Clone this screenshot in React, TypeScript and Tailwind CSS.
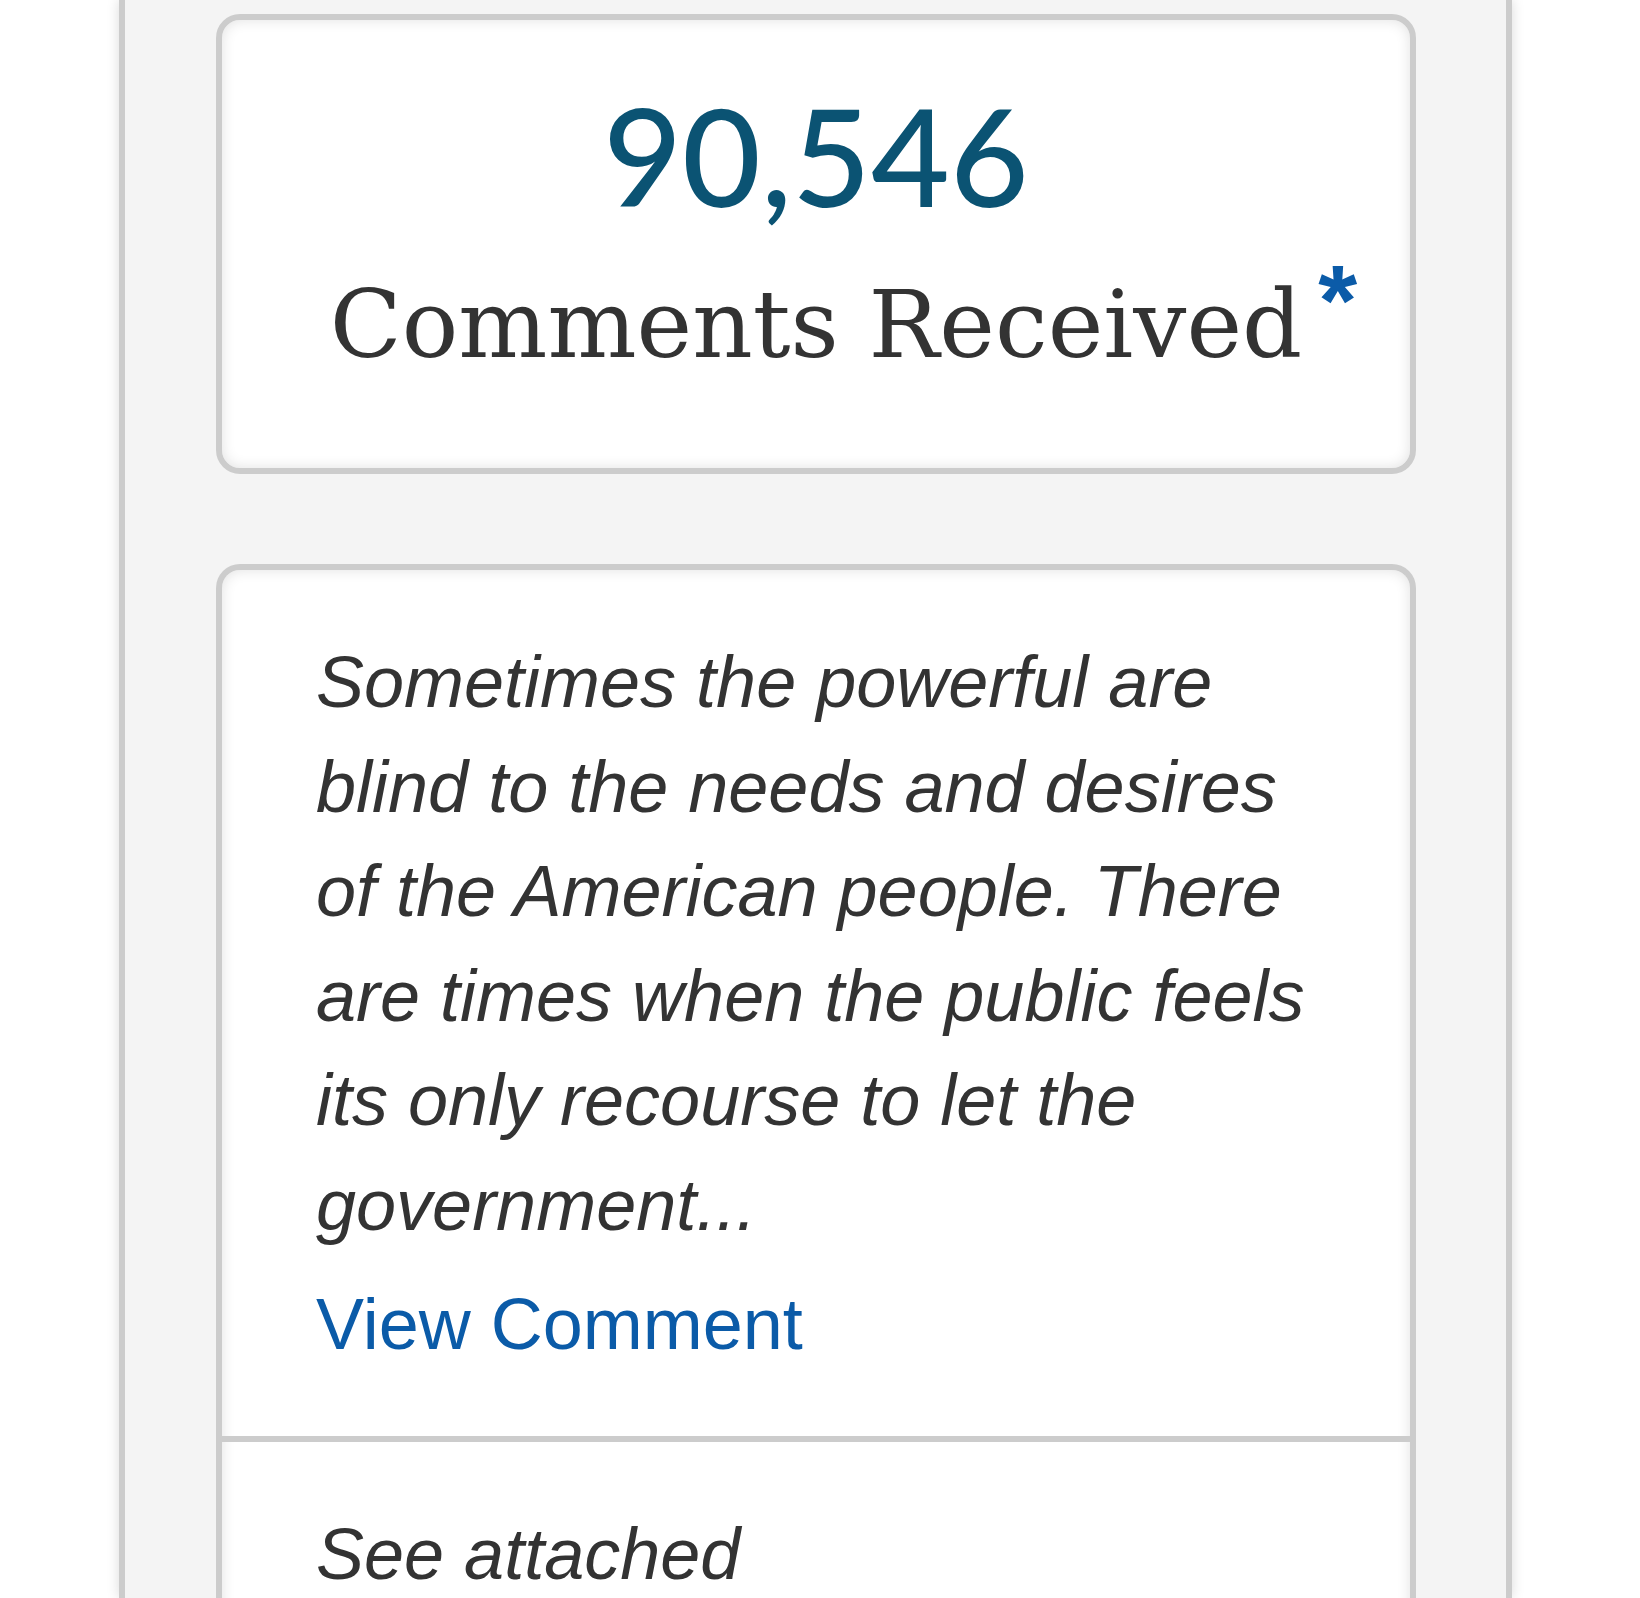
import React from "react";

const comments = [
  {
    text: "Sometimes the powerful are blind to the needs and desires of the American people. There are times when the public feels its only recourse to let the government...",
    link: true,
  },
  {
    text: "See attached",
    link: false,
  },
];

const App = () => {
  return (
    <div className="h-[1598px] overflow-hidden bg-white">
      <div className="ml-[119px] h-full w-[1393px] border-x-[6px] border-[#cccccc] bg-[#f4f4f4] pl-[91px] pt-[14px] shadow-[0_0_12px_rgba(0,0,0,0.15)]">
        <div className="relative h-[460px] w-[1200px] rounded-[24px] border-[6px] border-[#cccccc] bg-white text-center shadow-[inset_0_0_14px_rgba(0,0,0,0.12)]">
          <div
            className="pt-[67px] text-[136px] font-medium leading-none text-[#0b5373]"
            style={{ fontFamily: "Lato, 'Open Sans', sans-serif" }}
          >
            90,546
          </div>
          <div className="mt-[55px] flex justify-center">
            <h2
              className="relative text-[94px] leading-none text-[#333333]"
              style={{ fontFamily: "'DejaVu Serif', serif" }}
            >
              Comments Received
              <span
                className="absolute left-full top-[-28px] ml-[16px] text-[100px] font-bold leading-none text-[#0b5ba8]"
                style={{ fontFamily: "'Liberation Sans', Arial, sans-serif" }}
              >
                *
              </span>
            </h2>
          </div>
        </div>

        <div className="mt-[90px] w-[1200px] overflow-hidden rounded-t-[24px] border-x-[6px] border-t-[6px] border-[#cccccc] bg-white shadow-[inset_0_0_14px_rgba(0,0,0,0.12)]">
          {comments.map((c, i) => (
            <div
              key={i}
              className={
                "px-[94px] pb-[60px] pt-[60px] " +
                (i > 0 ? "border-t-[6px] border-[#cccccc]" : "")
              }
              style={{ fontFamily: "'Liberation Sans', Arial, sans-serif" }}
            >
              <p className="text-[72px] italic leading-[104.6px] text-[#333333]">
                {c.text}
              </p>
              {c.link && (
                <a
                  href="#"
                  className="mt-[14px] block text-[72px] leading-[104.6px] text-[#0b5ba8]"
                >
                  View Comment
                </a>
              )}
            </div>
          ))}
        </div>
      </div>
    </div>
  );
};

export default App;
